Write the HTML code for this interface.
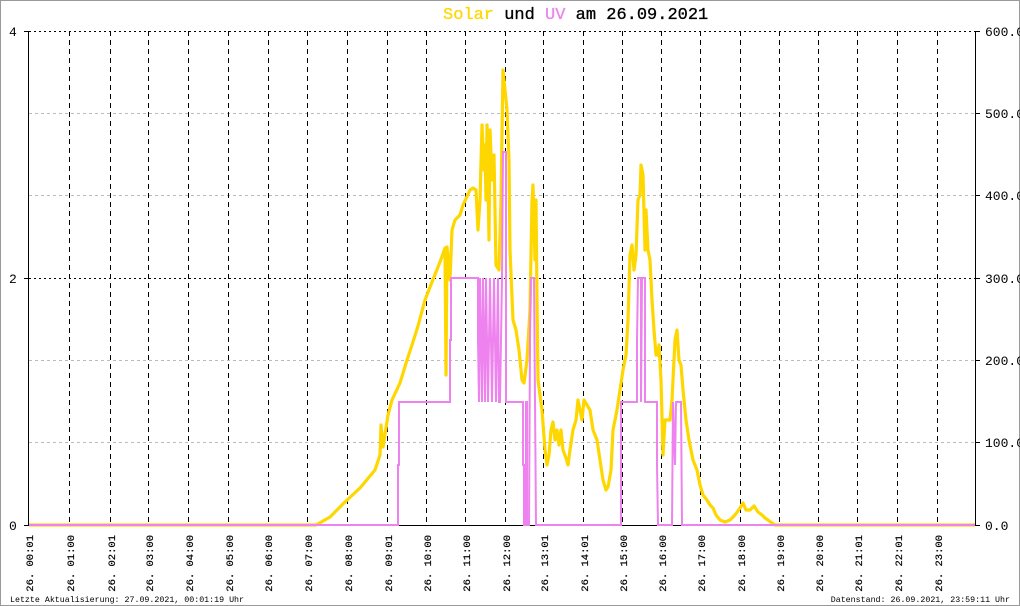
<!DOCTYPE html>
<html><head><meta charset="utf-8"><style>
html,body{margin:0;padding:0;background:#fff;}
svg{display:block;font-family:"Liberation Mono","DejaVu Sans Mono",monospace;}
</style></head><body>
<svg width="1020" height="606" viewBox="0 0 1020 606" xmlns="http://www.w3.org/2000/svg">
<rect x="0.5" y="0.5" width="1019" height="605" fill="#fff" stroke="#999"/>
<text x="443" y="19" font-size="17" fill="#000" stroke="#000" stroke-width="0.3"><tspan fill="#ffd700" stroke="#ffd700">Solar</tspan> und <tspan fill="#ee82ee" stroke="#ee82ee">UV</tspan> am 26.09.2021</text>
<g stroke="#bbb" stroke-dasharray="3,3" stroke-width="1">
<line x1="29" y1="113.5" x2="975" y2="113.5"/><line x1="29" y1="195.5" x2="975" y2="195.5"/>
<line x1="29" y1="360.5" x2="975" y2="360.5"/><line x1="29" y1="442.5" x2="975" y2="442.5"/>
</g>
<g stroke="#000" stroke-dasharray="2,3" stroke-width="1">
<line x1="29" y1="31.5" x2="975" y2="31.5"/><line x1="29" y1="278.5" x2="975" y2="278.5"/>
</g>
<g stroke="#000" stroke-dasharray="5,4" stroke-width="1">
<line x1="69.5" y1="31" x2="69.5" y2="525"/><line x1="110.5" y1="31" x2="110.5" y2="525"/><line x1="148.5" y1="31" x2="148.5" y2="525"/><line x1="188.5" y1="31" x2="188.5" y2="525"/><line x1="228.5" y1="31" x2="228.5" y2="525"/><line x1="268.5" y1="31" x2="268.5" y2="525"/><line x1="307.5" y1="31" x2="307.5" y2="525"/><line x1="347.5" y1="31" x2="347.5" y2="525"/><line x1="387.5" y1="31" x2="387.5" y2="525"/><line x1="426.5" y1="31" x2="426.5" y2="525"/><line x1="465.5" y1="31" x2="465.5" y2="525"/><line x1="505.5" y1="31" x2="505.5" y2="525"/><line x1="543.5" y1="31" x2="543.5" y2="525"/><line x1="583.5" y1="31" x2="583.5" y2="525"/><line x1="622.5" y1="31" x2="622.5" y2="525"/><line x1="661.5" y1="31" x2="661.5" y2="525"/><line x1="700.5" y1="31" x2="700.5" y2="525"/><line x1="740.5" y1="31" x2="740.5" y2="525"/><line x1="779.5" y1="31" x2="779.5" y2="525"/><line x1="818.5" y1="31" x2="818.5" y2="525"/><line x1="857.5" y1="31" x2="857.5" y2="525"/><line x1="897.5" y1="31" x2="897.5" y2="525"/><line x1="937.5" y1="31" x2="937.5" y2="525"/>
</g>
<g stroke="#000" stroke-width="1">
<line x1="28.5" y1="31" x2="28.5" y2="526"/><line x1="975.5" y1="31" x2="975.5" y2="526"/>
<line x1="24" y1="31.5" x2="29" y2="31.5"/><line x1="24" y1="278.5" x2="29" y2="278.5"/><line x1="24" y1="525.5" x2="29" y2="525.5"/>
<line x1="975" y1="31.5" x2="980" y2="31.5"/><line x1="975" y1="113.5" x2="980" y2="113.5"/><line x1="975" y1="195.5" x2="980" y2="195.5"/><line x1="975" y1="278.5" x2="980" y2="278.5"/><line x1="975" y1="360.5" x2="980" y2="360.5"/><line x1="975" y1="442.5" x2="980" y2="442.5"/><line x1="975" y1="525.5" x2="980" y2="525.5"/>
<line x1="29" y1="525.5" x2="975" y2="525.5"/>
</g>
<g font-size="13" fill="#000">
<text x="9" y="36">4</text><text x="9" y="283">2</text><text x="9" y="530">0</text>
<text x="985" y="36">600.0</text><text x="985" y="118">500.0</text><text x="985" y="200">400.0</text><text x="985" y="283">300.0</text><text x="985" y="365">200.0</text><text x="985" y="447">100.0</text><text x="985" y="530">0.0</text>
</g>
<polyline fill="none" stroke="#ffd700" stroke-width="3.2" stroke-linejoin="round" points="29,525 316,525 330,517 345,502 360,488 375,470 380,455 381,425 383,447 388,415 392,400 400,383 407,360 412,345 418,326 425,300 432,282 440,262 445,248 446,375 447,247 450,280 452,230 455,220 460,215 463,205 470,190 473,188 476,190 478,230 480,200 482,125 484,170 485,145 486,200 487,125 489,240 490,130 492,180 494,155 496,265 499,270 501,200 503,70 505,90 507,110 509,160 510,250 513,320 516,330 519,350 522,380 524,383 527,360 530,310 532,200 533,185 535,260 536,200 537,300 538,380 542,410 545,450 547,465 549,455 551,430 553,422 555,440 557,430 559,445 561,430 563,450 566,458 568,465 570,450 573,430 576,420 578,400 580,410 582,420 584,400 587,405 590,410 593,430 597,440 600,460 603,480 606,490 608,487 611,470 613,430 617,410 620,390 623,370 626,355 628,320 630,255 632,245 634,270 636,255 638,200 640,195 641,165 643,175 645,250 646,210 648,250 650,260 652,300 654,330 656,355 658,355 659,345 661,380 663,455 665,420 667,420 670,420 672,400 675,340 677,330 679,360 681,365 683,390 686,420 689,440 693,460 697,470 700,485 703,495 707,500 710,505 713,508 716,515 720,520 725,522 730,520 735,515 740,508 743,503 746,510 750,510 754,506 758,512 762,515 765,518 768,520 772,523 775,525 975,525"/>
<polyline fill="none" stroke="#ee82ee" stroke-width="2" points="29,525 398,525 398,465 399,465 399,402 450,402 450,340 451,340 451,278 478,278 478,340 479,402 480,278 482,402 483,278 485,402 486,278 488,402 490,278 492,402 494,278 496,402 498,278 499,402 500,402 502,278 503,152 506,152 506,402 509,402 523,402 523,465 524,465 524,525 526,525 526,402 527,402 527,525 529,525 530,340 531,278 534,278 535,402 536,525 621,525 621,402 637,402 637,340 638,278 641,278 641,402 642,278 645,278 645,402 657,402 657,465 658,525 672,525 673,402 675,465 676,402 681,402 682,525 975,525"/>
<g font-size="10.5" fill="#000" stroke="#000" stroke-width="0.2">
<text transform="translate(33,535) rotate(-90)" text-anchor="end">26. 00:01</text>
<text transform="translate(74,535) rotate(-90)" text-anchor="end">26. 01:00</text>
<text transform="translate(115,535) rotate(-90)" text-anchor="end">26. 02:01</text>
<text transform="translate(153,535) rotate(-90)" text-anchor="end">26. 03:00</text>
<text transform="translate(193,535) rotate(-90)" text-anchor="end">26. 04:00</text>
<text transform="translate(233,535) rotate(-90)" text-anchor="end">26. 05:00</text>
<text transform="translate(272,535) rotate(-90)" text-anchor="end">26. 06:00</text>
<text transform="translate(312,535) rotate(-90)" text-anchor="end">26. 07:00</text>
<text transform="translate(352,535) rotate(-90)" text-anchor="end">26. 08:00</text>
<text transform="translate(392,535) rotate(-90)" text-anchor="end">26. 09:01</text>
<text transform="translate(431,535) rotate(-90)" text-anchor="end">26. 10:00</text>
<text transform="translate(470,535) rotate(-90)" text-anchor="end">26. 11:00</text>
<text transform="translate(510,535) rotate(-90)" text-anchor="end">26. 12:00</text>
<text transform="translate(548,535) rotate(-90)" text-anchor="end">26. 13:01</text>
<text transform="translate(588,535) rotate(-90)" text-anchor="end">26. 14:01</text>
<text transform="translate(627,535) rotate(-90)" text-anchor="end">26. 15:00</text>
<text transform="translate(666,535) rotate(-90)" text-anchor="end">26. 16:00</text>
<text transform="translate(705,535) rotate(-90)" text-anchor="end">26. 17:00</text>
<text transform="translate(745,535) rotate(-90)" text-anchor="end">26. 18:00</text>
<text transform="translate(784,535) rotate(-90)" text-anchor="end">26. 19:00</text>
<text transform="translate(823,535) rotate(-90)" text-anchor="end">26. 20:00</text>
<text transform="translate(862,535) rotate(-90)" text-anchor="end">26. 21:01</text>
<text transform="translate(902,535) rotate(-90)" text-anchor="end">26. 22:01</text>
<text transform="translate(942,535) rotate(-90)" text-anchor="end">26. 23:00</text>
</g>
<g font-size="8.3" fill="#000">
<text x="10" y="602">Letzte Aktualisierung: 27.09.2021, 00:01:19 Uhr</text>
<text x="1010" y="602" text-anchor="end">Datenstand: 26.09.2021, 23:59:11 Uhr</text>
</g>
</svg>
</body></html>
